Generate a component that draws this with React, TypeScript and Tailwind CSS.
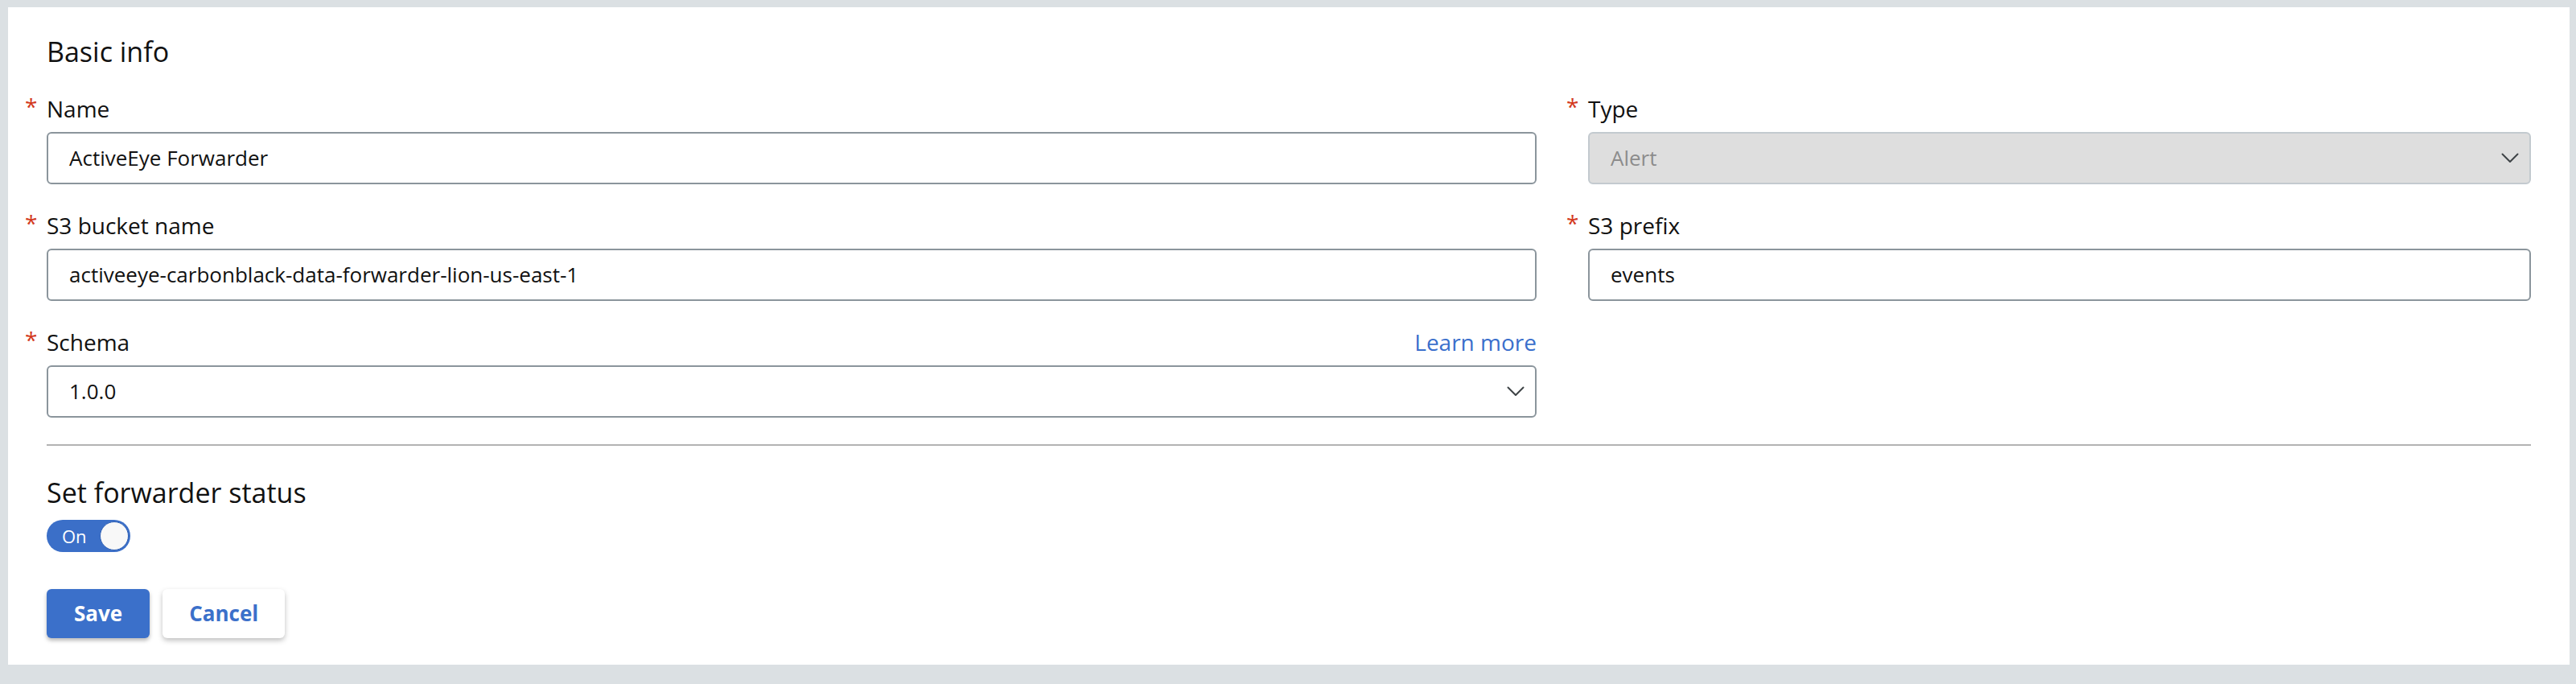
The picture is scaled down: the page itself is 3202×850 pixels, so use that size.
import { ReactNode } from 'react';

const font = { fontFamily: '"Open Sans", "Noto Sans", Arial, sans-serif' };

function Chevron() {
  return (
    <svg width="22" height="13" viewBox="0 0 22 13" fill="none" className="shrink-0">
      <path d="M1.5 1.5L11 11L20.5 1.5" stroke="#3f4447" strokeWidth="2" strokeLinecap="round" strokeLinejoin="round" />
    </svg>
  );
}

function Label({ children, extra }: { children: ReactNode; extra?: ReactNode }) {
  return (
    <div className="flex items-baseline justify-between h-[40px] leading-[40px] mb-[9px]">
      <span className="relative text-[28px] text-[#111]">
        <span className="absolute -left-[27px] top-[-3px] text-[28px] text-[#d33a1e]">*</span>
        {children}
      </span>
      {extra}
    </div>
  );
}

function TextInput({ value }: { value: string }) {
  return (
    <div className="h-[65px] rounded-[6px] border-2 border-[#8b959c] bg-white flex items-center pl-[26px] text-[26px] text-[#111]">
      {value}
    </div>
  );
}

function Select({ value, disabled }: { value: string; disabled?: boolean }) {
  return (
    <div
      className={`h-[65px] rounded-[6px] border-2 flex items-center justify-between pl-[26px] pr-[13px] text-[26px] ${
        disabled ? 'border-[#c3cacf] bg-[#dedede] text-[#8c8c8c]' : 'border-[#8b959c] bg-white text-[#111]'
      }`}
    >
      <span>{value}</span>
      <Chevron />
    </div>
  );
}

export default function App() {
  return (
    <div style={font} className="w-[3202px] h-[850px] bg-[#dbe0e3] pt-[9px] pl-[10px] pr-[8px]">
      <div className="bg-white px-[48px] pt-[32px] pb-[33px]">
        <h2 className="text-[34px] leading-[46px] text-[#111]">Basic info</h2>

        <div className="mt-[28px] grid grid-cols-[1852px_1172px] gap-x-[64px] gap-y-[31px]">
          <div>
            <Label>Name</Label>
            <TextInput value="ActiveEye Forwarder" />
          </div>
          <div>
            <Label>Type</Label>
            <Select value="Alert" disabled />
          </div>
          <div>
            <Label>S3 bucket name</Label>
            <TextInput value="activeeye-carbonblack-data-forwarder-lion-us-east-1" />
          </div>
          <div>
            <Label>S3 prefix</Label>
            <TextInput value="events" />
          </div>
          <div>
            <Label extra={<a className="text-[28px] text-[#3a6fcc] cursor-pointer">Learn more</a>}>Schema</Label>
            <Select value="1.0.0" />
          </div>
        </div>

        <div className="mt-[33px] h-[2px] bg-[#b3b3b3]" />

        <h2 className="mt-[35px] text-[34px] leading-[46px] text-[#111]">Set forwarder status</h2>

        <button className="mt-[11px] flex items-center justify-between w-[104px] h-[40px] rounded-full bg-[#3b6fc8] pl-[19px] pr-[2px]">
          <span className="text-[22px] text-white leading-none">On</span>
          <span className="w-[36px] h-[36px] rounded-full bg-[#f8f8f8] border border-[#2d5fb5]" />
        </button>

        <div className="mt-[46px] flex gap-[16px]">
          <button className="h-[61px] px-[34px] rounded-[6px] bg-[#3b70ca] text-white text-[26px] font-bold shadow-[0_3px_5px_rgba(0,0,0,0.28)]">
            Save
          </button>
          <button className="h-[61px] px-[33px] rounded-[6px] bg-white text-[#3b70ca] text-[26px] font-bold shadow-[0_3px_6px_rgba(0,0,0,0.25)]">
            Cancel
          </button>
        </div>
      </div>
    </div>
  );
}
